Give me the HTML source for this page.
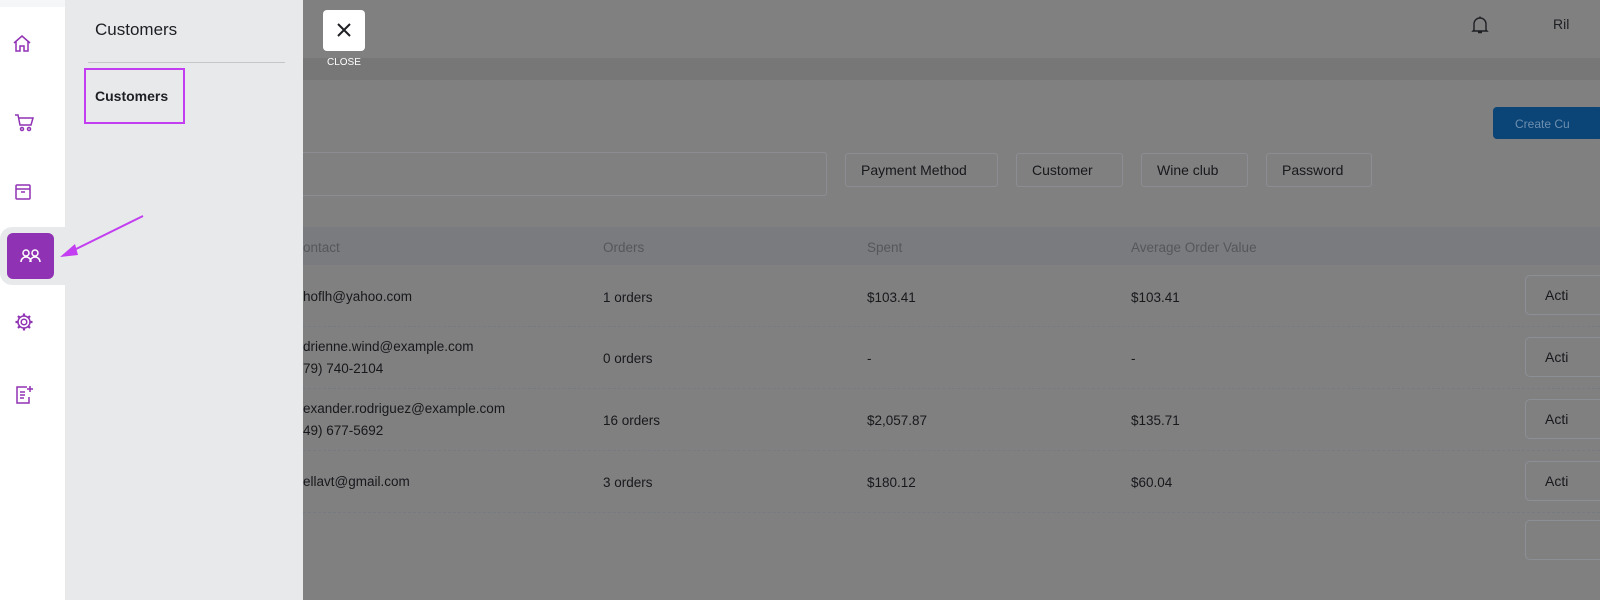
<!DOCTYPE html>
<html><head><style>
html{background:#808080}
body{margin:0;width:1600px;height:538px;overflow:hidden;position:relative;background:#808080;font-family:"Liberation Sans",sans-serif;}
.a{position:absolute}
.t{color:#17181c;font-size:13.5px}
.row{position:absolute;left:303px;right:0;border-bottom:1px dashed #777a80}
.btn{position:absolute;left:1525px;width:90px;height:40px;border:1px solid #8c8f96;border-radius:5px;box-sizing:border-box;font-size:14px;color:#17181c;padding:11px 0 0 19px}
.flt{position:absolute;top:153px;height:34px;border:1px solid #8b8d92;border-radius:3px;box-sizing:border-box;font-size:14px;color:#17181c;padding:8px 0 0 15px}
</style></head><body>
<div class="a" style="left:303px;top:58px;width:1297px;height:22px;background:#777"></div>
<div class="a" style="left:303px;top:227px;width:1297px;height:38px;background:#7a7b7e"></div>
<div class="a" style="left:1493px;top:107px;width:110px;height:32px;background:#0b4476;border-radius:4px;color:#6d8fb0;font-size:12px;padding:10px 0 0 22px;box-sizing:border-box">Create Cu</div>
<div class="a" style="left:290px;top:152px;width:535px;height:42px;border:1px solid #8b8d92;border-radius:3px"></div>
<div class="flt" style="left:845px;width:153px">Payment Method</div>
<div class="flt" style="left:1016px;width:107px">Customer</div>
<div class="flt" style="left:1141px;width:107px">Wine club</div>
<div class="flt" style="left:1266px;width:106px">Password</div>
<div class="a t" style="left:303px;top:240px;color:#55575c">ontact</div>
<div class="a t" style="left:603px;top:240px;color:#55575c">Orders</div>
<div class="a t" style="left:867px;top:240px;color:#55575c">Spent</div>
<div class="a t" style="left:1131px;top:240px;color:#55575c">Average Order Value</div>
<div class="row" style="top:265px;height:61px"></div>
<div class="row" style="top:326px;height:62px"></div>
<div class="row" style="top:388px;height:62px"></div>
<div class="row" style="top:450px;height:62px"></div>
<div class="a t" style="left:303px;top:289px">hoflh@yahoo.com</div>
<div class="a t" style="left:603px;top:290px">1 orders</div><div class="a t" style="left:867px;top:290px">$103.41</div><div class="a t" style="left:1131px;top:290px">$103.41</div>
<div class="btn" style="top:275px">Acti</div>
<div class="a t" style="left:303px;top:339px">drienne.wind@example.com</div><div class="a t" style="left:303px;top:361px">79) 740-2104</div>
<div class="a t" style="left:603px;top:351px">0 orders</div><div class="a t" style="left:867px;top:351px">-</div><div class="a t" style="left:1131px;top:351px">-</div>
<div class="btn" style="top:337px">Acti</div>
<div class="a t" style="left:303px;top:401px">exander.rodriguez@example.com</div><div class="a t" style="left:303px;top:423px">49) 677-5692</div>
<div class="a t" style="left:603px;top:413px">16 orders</div><div class="a t" style="left:867px;top:413px">$2,057.87</div><div class="a t" style="left:1131px;top:413px">$135.71</div>
<div class="btn" style="top:399px">Acti</div>
<div class="a t" style="left:303px;top:474px">ellavt@gmail.com</div>
<div class="a t" style="left:603px;top:475px">3 orders</div><div class="a t" style="left:867px;top:475px">$180.12</div><div class="a t" style="left:1131px;top:475px">$60.04</div>
<div class="btn" style="top:461px">Acti</div>
<div class="btn" style="top:520px"></div>
<svg class="a" style="left:1471px;top:15px" width="18" height="20" viewBox="0 0 18 20" fill="none" stroke="#1e1f24" stroke-width="1.4"><path d="M3 15V9a6 6 0 0112 0v6l1 1H2z M7 17.5h4 M9 1.5v1.5"/></svg>
<div class="a" style="left:1553px;top:16px;font-size:14px;color:#1e1f24">Ril</div>
<div class="a" style="left:323px;top:10px;width:42px;height:41px;background:#fff;border-radius:4px"></div>
<svg class="a" style="left:336px;top:22px" width="16" height="16" viewBox="0 0 16 16" stroke="#1e1f24" stroke-width="2"><path d="M2 2L14 14M14 2L2 14"/></svg>
<div class="a" style="left:327px;top:57px;font-size:10px;color:#fff">CLOSE</div>
<div class="a" style="left:0;top:0;width:65px;height:600px;background:#fff"></div>
<div class="a" style="left:0;top:0;width:65px;height:7px;background:#f5f6f8"></div>
<div class="a" style="left:65px;top:0;width:238px;height:600px;background:#e8e9eb"></div>
<div class="a" style="left:95px;top:20px;font-size:17px;color:#1e1f24">Customers</div>
<div class="a" style="left:88px;top:62px;width:197px;height:1px;background:#c4c5c8"></div>
<div class="a" style="left:84px;top:68px;width:101px;height:56px;border:2px solid #c23ef0;box-sizing:border-box"></div>
<div class="a" style="left:95px;top:88px;font-size:14px;color:#1e1f24;font-weight:bold">Customers</div>
<div class="a" style="left:0;top:227px;width:65px;height:58px;background:#e8e9eb;border-radius:12px 0 0 12px"></div>
<div class="a" style="left:7px;top:233px;width:47px;height:46px;background:#9032b4;border-radius:6px"></div>
<svg class="a" style="left:20px;top:248px" width="22" height="16" viewBox="0 0 22 16" fill="none" stroke="#fff" stroke-width="1.5"><circle cx="6" cy="5" r="3"/><circle cx="15" cy="5" r="3"/><path d="M1 14a5 5 0 0110 0M10 14a5 5 0 0110 0"/></svg>
<svg class="a" style="left:60px;top:213px" width="85" height="45" viewBox="0 0 85 45"><path d="M83 3L8 40" stroke="#c23ef0" stroke-width="2"/><path d="M0 44L15 31L18 42Z" fill="#c23ef0"/></svg>
<svg class="a" style="left:12px;top:33px" width="20" height="20" viewBox="0 0 20 20" fill="none" stroke="#9032b4" stroke-width="1.5"><path d="M2 10L10 3l8 7M4 8.5V18h4v-5h4v5h4V8.5"/></svg>
<svg class="a" style="left:13px;top:113px" width="22" height="20" viewBox="0 0 22 20" fill="none" stroke="#9032b4" stroke-width="1.5"><path d="M2 2h3l2 10h11l2-7H6"/><circle cx="9" cy="16" r="1.5"/><circle cx="16" cy="16" r="1.5"/></svg>
<svg class="a" style="left:14px;top:183px" width="20" height="18" viewBox="0 0 20 18" fill="none" stroke="#9032b4" stroke-width="1.5"><rect x="2" y="2" width="14" height="14" rx="1"/><path d="M2 6h14M7 9h4"/></svg>
<svg class="a" style="left:14px;top:312px" width="20" height="20" viewBox="0 0 20 20" fill="none" stroke="#9032b4" stroke-width="1.5"><circle cx="10" cy="10" r="2.8"/><circle cx="10" cy="10" r="6"/><path d="M10 1.5v2.5M10 16v2.5M1.5 10H4M16 10h2.5M4 4l1.8 1.8M14.2 14.2L16 16M16 4l-1.8 1.8M5.8 14.2L4 16" stroke-width="2.2"/></svg>
<svg class="a" style="left:15px;top:385px" width="20" height="20" viewBox="0 0 20 20" fill="none" stroke="#9032b4" stroke-width="1.5"><path d="M12 2H2v16h12v-6M5 7h5M5 10h5M5 13h4M15 1v6M12 4h6"/></svg>
</body></html>
